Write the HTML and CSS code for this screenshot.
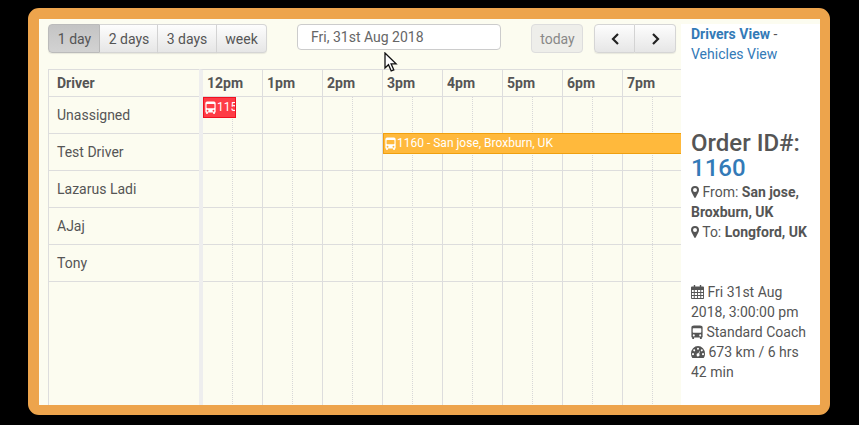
FILE: index.html
```html
<!DOCTYPE html>
<html lang="en">
<head>
<meta charset="utf-8">
<title>Drivers View</title>
<link rel="stylesheet" href="styles.css">
</head>
<body>
<svg class="defs" width="0" height="0" aria-hidden="true">
  <symbol id="bus" viewBox="0 0 12 13" preserveAspectRatio="none">
    <path fill="currentColor" fill-rule="evenodd" d="M3 .5h6c1.5 0 2.600.7 2.600 1.600V11c0 .4-.2.6-.6.6h-.2v.9c0 .3-.2.5-.5.5h-.9c-.3 0-.5-.2-.5-.5v-.9H3.100v.9c0 .3-.2.5-.5.5h-.9c-.3 0-.5-.2-.5-.5v-.9H1c-.4 0-.6-.2-.6-.6V2.100C.4 1.200 1.500.5 3 .5zM2.300 3c-.4 0-.6.2-.6.6v3c0 .4.2.6.6.6h7.400c.4 0 .6-.2.6-.6v-3c0-.4-.2-.6-.6-.6zM2.800 8.700a1 1 0 1 0 0 2 1 1 0 0 0 0-2zm6.400 0a1 1 0 1 0 0 2 1 1 0 0 0 0-2z"/>
  </symbol>
  <symbol id="pin" viewBox="0 0 8 12">
    <path fill="currentColor" fill-rule="evenodd" d="M4 0a4 4 0 0 1 4 4c0 1-.3 1.700-.7 2.500L4.700 11.500c-.3.600-1.100.600-1.400 0L.7 6.500C.3 5.700 0 5 0 4a4 4 0 0 1 4-4zm0 2a2 2 0 1 0 0 4 2 2 0 0 0 0-4z"/>
  </symbol>
  <symbol id="cal" viewBox="0 0 14 14" preserveAspectRatio="none">
    <path fill="currentColor" fill-rule="evenodd" d="M3 0h1.500v1.500h5V0H11v1.500h2c.6 0 1 .4 1 1V13c0 .6-.4 1-1 1H1c-.6 0-1-.4-1-1V2.500c0-.6.400-1 1-1h2zM1 5v2h2V5zm3 0v2h2.500V5zm3.500 0v2H10V5zM11 5v2h2V5zM1 8v2h2V8zm3 0v2h2.500V8zm3.500 0v2H10V8zM11 8v2h2V8zM1 11v2h2v-2zm3 0v2h2.500v-2zm3.500 0v2H10v-2zm3.500 0v2h2v-2z"/>
  </symbol>
  <symbol id="gauge" viewBox="0 0 14 11" preserveAspectRatio="none">
    <path fill="currentColor" fill-rule="evenodd" d="M7 0a7 7 0 0 1 7 7c0 1.500-.4 2.800-1.200 3.800-.1.100-.3.200-.5.200H1.700c-.2 0-.4-.1-.5-.2C.4 9.800 0 8.500 0 7a7 7 0 0 1 7-7zM7 1.500a1 1 0 1 0 0 2 1 1 0 0 0 0-2zM3.200 3a1 1 0 1 0 0 2 1 1 0 0 0 0-2zm7.600 0a1 1 0 1 0 0 2 1 1 0 0 0 0-2zM2 6.500a1 1 0 1 0 0 2 1 1 0 0 0 0-2zm10 0a1 1 0 1 0 0 2 1 1 0 0 0 0-2zM9.200 4 7.300 6.600a1.500 1.500 0 1 0 .9.500z"/>
  </symbol>
</svg>

<div class="frame">
  <main class="scheduler">
    <div class="toolbar">
      <div class="btn-group">
        <button class="btn active w52">1 day</button>
        <button class="btn w58">2 days</button>
        <button class="btn w59">3 days</button>
        <button class="btn w50">week</button>
      </div>
      <div class="date-input">Fri, 31st Aug 2018</div>
      <button class="btn today">today</button>
      <div class="btn-group nav-group">
        <button class="btn nav" aria-label="Previous">
          <svg width="9" height="12" viewBox="0 0 9 12"><path d="M7 1 2 6l5 5" fill="none" stroke="currentColor" stroke-width="2.200"/></svg>
        </button>
        <button class="btn nav" aria-label="Next">
          <svg width="9" height="12" viewBox="0 0 9 12"><path d="m2 1 5 5-5 5" fill="none" stroke="currentColor" stroke-width="2.200"/></svg>
        </button>
      </div>
    </div>

    <div class="calendar">
      <div class="resources">
        <div class="res-head">Driver</div>
        <div class="res-row">Unassigned</div>
        <div class="res-row">Test Driver</div>
        <div class="res-row">Lazarus Ladi</div>
        <div class="res-row">AJaj</div>
        <div class="res-row">Tony</div>
      </div>
      <div class="timeline">
        <div class="time-head">
          <div class="hour">12pm</div>
          <div class="hour">1pm</div>
          <div class="hour">2pm</div>
          <div class="hour">3pm</div>
          <div class="hour">4pm</div>
          <div class="hour">5pm</div>
          <div class="hour">6pm</div>
          <div class="hour">7pm</div>
        </div>
        <div class="time-body">
          <div class="slots">
            <div class="slot"></div><div class="slot"></div><div class="slot"></div><div class="slot"></div>
            <div class="slot"></div><div class="slot"></div><div class="slot"></div><div class="slot"></div>
          </div>
          <div class="lane">
            <div class="event red"><svg class="ev-icon"><use href="#bus"/></svg><span>1159 - </span></div>
          </div>
          <div class="lane">
            <div class="event orange"><svg class="ev-icon"><use href="#bus"/></svg><span>1160 - San jose, Broxburn, UK</span></div>
          </div>
          <div class="lane"></div>
          <div class="lane"></div>
          <div class="lane"></div>
        </div>
      </div>
    </div>

    <svg class="cursor" width="15" height="20" viewBox="0 0 15 20" aria-hidden="true">
      <path d="M1 1v15l3.500-3.300 2.700 6.200 2.600-1.100-2.700-6h5z" fill="#fff" stroke="#111" stroke-width="1.300"/>
    </svg>
  </main>

  <aside class="details">
    <p class="views"><a class="link strong" href="#">Drivers View</a> - <a class="link" href="#">Vehicles View</a></p>
    <h2 class="order">Order ID#: <a class="link" href="#">1160</a></h2>
    <p class="route">
      <svg class="ic pin"><use href="#pin"/></svg> From: <b>San jose, Broxburn, UK</b><br>
      <svg class="ic pin"><use href="#pin"/></svg> To: <b>Longford, UK</b>
    </p>
    <p class="meta">
      <svg class="ic cal"><use href="#cal"/></svg> Fri 31st Aug 2018, 3:00:00 pm<br>
      <svg class="ic bus"><use href="#bus"/></svg> Standard Coach<br>
      <svg class="ic gauge"><use href="#gauge"/></svg> 673 km / 6 hrs 42 min
    </p>
  </aside>
</div>
</body>
</html>
```

FILE: styles.css
```css
* { box-sizing: border-box; }

html, body {
  margin: 0;
  height: 100%;
  background: #000;
}

body {
  padding: 8px 29px 10px 28px;
  font-family: Roboto, "Liberation Sans", sans-serif;
  font-size: 14px;
  line-height: 20px;
  color: #555;
  overflow: hidden;
}

.defs { position: absolute; }

.frame {
  display: flex;
  height: 407px;
  border: solid #eda44c;
  border-width: 11px 10px 10px 11px;
  border-radius: 11px;
  background: #fcfcf0;
  background-clip: padding-box;
  overflow: hidden;
}

.scheduler {
  position: relative;
  flex: 0 0 642px;
  width: 642px;
  padding: 5px 0 0 9px;
  overflow: hidden;
}

.toolbar {
  display: flex;
  align-items: flex-start;
  height: 45px;
}

.btn-group { display: flex; }

.btn {
  height: 29px;
  padding: 0;
  border: 1px solid #d5d5d5;
  border-left-width: 0;
  background: linear-gradient(#fdfdfd, #e6e6e6);
  font: inherit;
  color: #555;
  box-shadow: 0 1px 1px rgba(0, 0, 0, .08);
}

.w52 { width: 52px; padding-left: 1px; }
.w58 { width: 58px; padding-left: 1px; }
.w59 { width: 59px; }
.w50 { width: 50px; }

.btn-group .btn:first-child {
  border-left-width: 1px;
  border-radius: 4px 0 0 4px;
}

.btn-group .btn:last-child { border-radius: 0 4px 4px 0; }

.btn.active {
  background: linear-gradient(#c4c4c4, #d2d2d2);
  border-color: #bbb;
}

.date-input {
  width: 204px;
  height: 26px;
  margin-left: 30px;
  padding: 2px 13px;
  border: 1px solid #ccc;
  border-radius: 4px;
  background: #fff;
  line-height: 20px;
  color: #666;
}

.btn.today {
  width: 52px;
  margin-left: 30px;
  padding: 0 0 0 1px;
  border: 1px solid #ddd;
  border-radius: 4px;
  background: #eeeeea;
  color: #888;
  box-shadow: none;
}

.nav-group { margin-left: 11px; }

.btn.nav {
  display: flex;
  align-items: center;
  justify-content: center;
  width: 41px;
  padding: 0;
  color: #222;
}

.btn.nav:first-child { padding-left: 1px; }

.calendar { display: flex; }

.resources {
  flex: 0 0 151px;
  height: 400px;
  border-left: 1px solid #ddd;
  border-top: 1px solid #ddd;
}

.res-head {
  height: 27px;
  padding: 3px 8px;
  font-weight: 700;
  border-bottom: 1px solid #ddd;
}

.res-row {
  display: flex;
  align-items: center;
  height: 37px;
  padding: 0 8px;
  border-bottom: 1px solid #ddd;
}

.timeline {
  flex: 1;
  min-width: 0;
  border-top: 1px solid #ddd;
  border-left: 4px solid #eee;
  height: 400px;
}

.time-head {
  display: flex;
  height: 27px;
  border-bottom: 1px solid #ddd;
}

.hour {
  flex: 0 0 60px;
  padding: 3px 5px 0 4px;
  border-right: 1px solid #ddd;
  font-weight: 700;
}

.time-body {
  position: relative;
  height: 372px;
}

.slots {
  position: absolute;
  inset: 0;
  display: flex;
}

.slot {
  flex: 0 0 60px;
  border-right: 1px solid #ddd;
  background: linear-gradient(#d8d8d8 50%, transparent 50%) 29px 0 / 1px 2px repeat-y;
}

.lane {
  position: relative;
  height: 37px;
  border-bottom: 1px solid #ddd;
}

.event {
  position: absolute;
  height: 21px;
  padding-left: 1px;
  line-height: 18px;
  font-size: 12px;
  color: #fff;
  white-space: nowrap;
  overflow: hidden;
  border: 1px solid;
}

.event span { vertical-align: top; }

.ev-icon {
  width: 11px;
  height: 13px;
  margin: 3px 1px 0 0;
  vertical-align: top;
}

.red {
  top: 0;
  left: 0;
  width: 33px;
  background: #fe3c46;
  border-color: #f01020;
}

.orange {
  top: -1px;
  left: 180px;
  right: -400px;
  background: #ffb93c;
  border-color: #f0a010;
}

.cursor {
  position: absolute;
  left: 345px;
  top: 33px;
}

.details {
  flex: 1;
  min-width: 0;
  margin-top: 5px;
  padding: 0 5px 0 10px;
  background: #fff;
}

.details p { margin: 0; }

.link {
  color: #337ab7;
  text-decoration: none;
}

.strong { font-weight: 700; }

.order {
  margin: 67px 0 0;
  font-size: 24px;
  line-height: 25px;
  font-weight: 500;
}

.route { padding-top: 1px; }

.details .meta { margin-top: 40px; }

.ic {
  color: #555;
  vertical-align: -1px;
}

.pin { width: 8px; height: 12px; }
.cal { width: 13px; height: 14px; vertical-align: -2px; }
.bus { width: 12px; height: 14px; vertical-align: -2px; }
.gauge { width: 14px; height: 12px; }
```
